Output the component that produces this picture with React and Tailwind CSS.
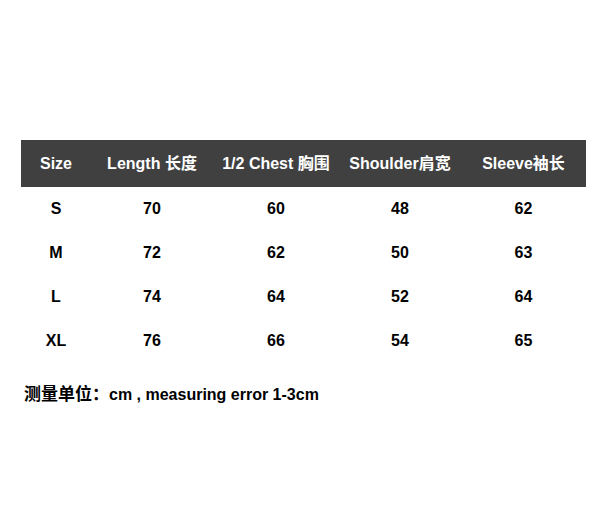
import React from "react";

const columns = [
  { label: "Size", width: "w-[70px]" },
  { label: "Length 长度", width: "w-[122px]" },
  { label: "1/2 Chest 胸围", width: "w-[126px]" },
  { label: "Shoulder肩宽", width: "w-[122px]" },
  { label: "Sleeve袖长", width: "w-[125px]" },
];

const rows = [
  ["S", "70", "60", "48", "62"],
  ["M", "72", "62", "50", "63"],
  ["L", "74", "64", "52", "64"],
  ["XL", "76", "66", "54", "65"],
];

function App() {
  return (
    <div
      className="w-[601px] h-[528px] bg-white pt-[140px] pl-[21px] font-bold text-[16px]"
      style={{ fontFamily: '"Liberation Sans", Arial, "Noto Sans CJK SC", sans-serif' }}
    >
      <div className="w-[565px]">
        <div className="flex h-[47px] items-center bg-[#404040] text-white">
          {columns.map((col) => (
            <div key={col.label} className={`${col.width} text-center whitespace-nowrap`}>
              {col.label}
            </div>
          ))}
        </div>
        {rows.map((row) => (
          <div key={row[0]} className="flex h-[44px] items-center text-black">
            {row.map((cell, i) => (
              <div key={i} className={`${columns[i].width} text-center`}>
                {cell}
              </div>
            ))}
          </div>
        ))}
      </div>
      <div className="mt-[19px] pl-[3px] text-black whitespace-nowrap">
        <span className="text-[17px]">测量单位：</span>cm , measuring error 1-3cm
      </div>
    </div>
  );
}

export default App;
